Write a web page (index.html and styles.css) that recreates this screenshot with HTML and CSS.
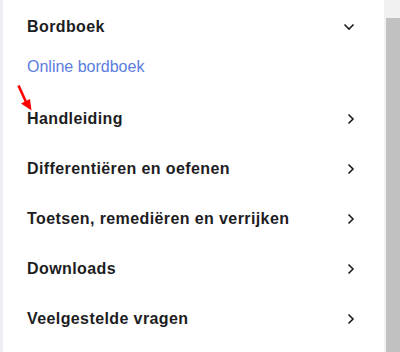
FILE: index.html
```html
<!DOCTYPE html>
<html lang="nl">
<head>
  <meta charset="UTF-8">
  <title>Menu</title>
  <link rel="stylesheet" href="styles.css">
</head>
<body>
  <div class="frame">
    <div class="menu">
      <div class="row open">
        <span>Bordboek</span>
        <svg class="chev" width="12" height="8" viewBox="0 0 12 8"><polyline points="1.5,1.5 6,6 10.5,1.5" /></svg>
      </div>
      <a class="sublink" href="#">Online bordboek</a>
      <div class="row">
        <span>Handleiding</span>
        <svg class="chev" width="8" height="12" viewBox="0 0 8 12"><polyline points="1.5,1.5 6,6 1.5,10.5" /></svg>
      </div>
      <div class="row">
        <span>Differentiëren en oefenen</span>
        <svg class="chev" width="8" height="12" viewBox="0 0 8 12"><polyline points="1.5,1.5 6,6 1.5,10.5" /></svg>
      </div>
      <div class="row">
        <span>Toetsen, remediëren en verrijken</span>
        <svg class="chev" width="8" height="12" viewBox="0 0 8 12"><polyline points="1.5,1.5 6,6 1.5,10.5" /></svg>
      </div>
      <div class="row">
        <span>Downloads</span>
        <svg class="chev" width="8" height="12" viewBox="0 0 8 12"><polyline points="1.5,1.5 6,6 1.5,10.5" /></svg>
      </div>
      <div class="row">
        <span>Veelgestelde vragen</span>
        <svg class="chev" width="8" height="12" viewBox="0 0 8 12"><polyline points="1.5,1.5 6,6 1.5,10.5" /></svg>
      </div>

      <!-- annotation arrow -->
      <svg class="pointer" width="20" height="30" viewBox="0 0 20 30">
        <line x1="3.5" y1="1.5" x2="11" y2="18" />
        <polygon points="6,19.5 15,15 16.5,26.5" />
      </svg>
    </div>
    <div class="scrollbar">
      <div class="thumb"></div>
    </div>
  </div>
</body>
</html>
```

FILE: styles.css
```css
html, body {
  margin: 0;
  height: 100%;
  background-color: #fff;
}

body {
  font-family: "Liberation Sans", Arial, sans-serif;
  color: #1d1d1f;
  overflow: hidden;
}

.frame {
  display: flex;
  height: 352px;
  border-left: 3px solid #eeeff2;
}

.menu {
  position: relative;
  flex: 1;
  padding: 1px 29px 0 24px;
}

.row {
  display: flex;
  justify-content: space-between;
  align-items: center;
  height: 50px;
  font-size: 16px;
  font-weight: bold;
  letter-spacing: 0.4px;
}

.row.open {
  height: 52px;
}

.sublink {
  display: flex;
  align-items: center;
  height: 28px;
  margin-bottom: 13px;
  font-size: 16px;
  color: #5b7de0;
  text-decoration: none;
}

.chev polyline {
  fill: none;
  stroke: #1d1d1f;
  stroke-width: 1.6;
}

.pointer {
  position: absolute;
  left: 12px;
  top: 84px;
}

.pointer line {
  stroke: #f00;
  stroke-width: 2.6;
}

.pointer polygon {
  fill: #f00;
}

.scrollbar {
  width: 14px;
  background-color: #f1f1f1;
  padding: 18px 0 0 2px;
}

.thumb {
  height: 100%;
  background-color: #c1c1c1;
}
```
